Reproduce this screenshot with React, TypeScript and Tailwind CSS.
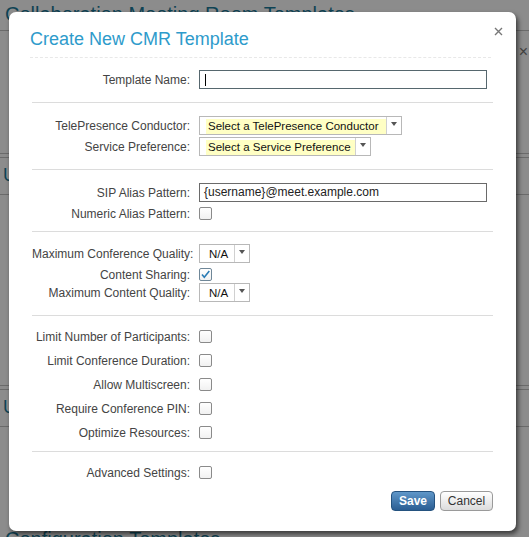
import { ReactNode } from 'react';

function Row({ label, className, children }: { label: string; className: string; children: ReactNode }) {
  return (
    <div className={`flex items-center ${className}`}>
      <div className="w-[158px] shrink-0 whitespace-nowrap text-right text-[12px] leading-[14px] text-[#444]">{label}</div>
      <div className="ml-[9px] flex">{children}</div>
    </div>
  );
}

function Checkbox({ checked = false }: { checked?: boolean }) {
  return (
    <div
      className={`h-[13px] w-[13px] rounded-[2px] border bg-linear-to-b from-white to-[#f1f1f1] ${
        checked ? 'border-[#6f8798]' : 'border-[#8a8a8a]'
      }`}
    >
      {checked && (
        <svg width="11" height="11" viewBox="0 0 11 11">
          <path d="M2 5.5 L4.3 8.3 L9.3 2" fill="none" stroke="#2a7bb4" strokeWidth="1.6" />
        </svg>
      )}
    </div>
  );
}

function Select({ text, className, highlight = false }: { text: string; className: string; highlight?: boolean }) {
  return (
    <div className={`flex h-[19px] border border-[#b8b8b8] bg-white ${className}`}>
      <div className="flex-1 overflow-hidden pt-[2px]">
        <span
          className={`block whitespace-nowrap text-[11.5px] leading-[15px] text-[#111] ${
            highlight ? 'ml-[6px] bg-[#ffffc4] px-[2px]' : 'pl-[9px]'
          }`}
        >
          {text}
        </span>
      </div>
      <div className="flex w-[15px] shrink-0 justify-center border-l border-[#d0d0d0] pt-[5px]">
        <svg width="6" height="4" viewBox="0 0 6 4">
          <path d="M0 0 H6 L3 4 Z" fill="#555" />
        </svg>
      </div>
    </div>
  );
}

function Separator({ className }: { className: string }) {
  return <div className={`h-px bg-[#dcdcdc] ${className}`} />;
}

export default function App() {
  return (
    <div className="relative h-[537px] w-[529px] overflow-hidden bg-white font-['Liberation_Sans',Arial,sans-serif]">
      {/* page behind the dialog */}
      <div>
        <h1 className="pl-[5px] pt-[2px] text-[20px] leading-[24px] text-[#1b7a9a]">Collaboration Meeting Room Templates</h1>
        <div className="mt-[4px] h-px bg-[#c4c4c4]" />
        <div className="flex justify-end pr-[1px] pt-[12px] text-[16px] leading-[18px] text-[#777]">×</div>
        <div className="mt-[92px] h-px bg-[#c4c4c4]" />
        <div className="mt-[3px] h-px bg-[#c4c4c4]" />
        <div className="pl-[3px] pt-[6px] text-[18px] leading-[22px] text-[#1b7a9a]">Upcoming</div>
        <div className="mt-[8px] h-px bg-[#c4c4c4]" />
        <div className="mt-[190px] h-px bg-[#c4c4c4]" />
        <div className="mt-[3px] h-px bg-[#c4c4c4]" />
        <div className="pl-[3px] pt-[6px] text-[18px] leading-[22px] text-[#1b7a9a]">Upcoming</div>
        <div className="mt-[8px] h-px bg-[#c4c4c4]" />
        <div className="pl-[5px] pt-[100px] text-[20px] leading-[24px] text-[#1b7a9a]">Configuration Templates</div>
      </div>
      <div className="absolute inset-0 bg-black/45" />

      {/* dialog */}
      <div className="absolute left-[9px] top-[12px] h-[519px] w-[507px] rounded-[7px] bg-white px-[23px] pt-[16px] shadow-[2px_3px_5px_rgba(0,0,0,0.6)]">
        <button className="absolute right-[13px] top-[15px]">
          <svg width="9" height="9" viewBox="0 0 9 9">
            <path d="M1 1 L8 8 M8 1 L1 8" stroke="#777" strokeWidth="1.4" />
          </svg>
        </button>

        <h2 className="-ml-[2px] text-[18px] leading-[22px] text-[#2e9bcb]">Create New CMR Template</h2>
        <div className="-ml-[2px] mr-[2px] mt-[7px] border-t border-dashed border-[#e8e8e8]" />

        <Row label="Template Name:" className="mt-[12px] h-[19px]">
          <div className="h-[19px] w-[288px] border border-[#56676e] bg-white pl-[5px] pt-[3px]">
            <div className="h-[12px] w-px bg-black" />
          </div>
        </Row>

        <Separator className="mt-[13px]" />

        <Row label="TelePresence Conductor:" className="mt-[13px] h-[19px]">
          <Select text="Select a TelePresence Conductor" className="w-[203px]" highlight />
        </Row>
        <Row label="Service Preference:" className="mt-[2px] h-[19px]">
          <Select text="Select a Service Preference" className="w-[172px]" highlight />
        </Row>

        <Separator className="mt-[13px]" />

        <Row label="SIP Alias Pattern:" className="mt-[13px] h-[19px]">
          <div className="h-[19px] w-[288px] border border-[#6a6a6a] bg-white pl-[4px] text-[12px] leading-[17px] text-[#222]">
            {'{username}@meet.example.com'}
          </div>
        </Row>
        <Row label="Numeric Alias Pattern:" className="mt-[5px] h-[13px]">
          <Checkbox />
        </Row>

        <Separator className="mt-[11px]" />

        <Row label="Maximum Conference Quality:" className="mt-[12px] h-[19px]">
          <Select text="N/A" className="w-[51px]" />
        </Row>
        <Row label="Content Sharing:" className="mt-[5px] h-[13px]">
          <Checkbox checked />
        </Row>
        <Row label="Maximum Content Quality:" className="mt-[2px] h-[19px]">
          <Select text="N/A" className="w-[51px]" />
        </Row>

        <Separator className="mt-[13px]" />

        <Row label="Limit Number of Participants:" className="mt-[14px] h-[13px]">
          <Checkbox />
        </Row>
        <Row label="Limit Conference Duration:" className="mt-[11px] h-[13px]">
          <Checkbox />
        </Row>
        <Row label="Allow Multiscreen:" className="mt-[11px] h-[13px]">
          <Checkbox />
        </Row>
        <Row label="Require Conference PIN:" className="mt-[11px] h-[13px]">
          <Checkbox />
        </Row>
        <Row label="Optimize Resources:" className="mt-[11px] h-[13px]">
          <Checkbox />
        </Row>

        <Separator className="mt-[12px]" />

        <Row label="Advanced Settings:" className="mt-[14px] h-[13px]">
          <Checkbox />
        </Row>

        <div className="mt-[12px] flex justify-end gap-[5px]">
          <button className="h-[20px] w-[44px] rounded-[4px] border border-[#24527f] bg-linear-to-b from-[#5f97c9] to-[#2b5e93] text-[12px] font-bold leading-[18px] text-white">
            Save
          </button>
          <button className="h-[20px] w-[53px] rounded-[4px] border border-[#9a9a9a] bg-linear-to-b from-white to-[#dcdcdc] text-[12px] leading-[18px] text-[#333]">
            Cancel
          </button>
        </div>
      </div>
    </div>
  );
}
